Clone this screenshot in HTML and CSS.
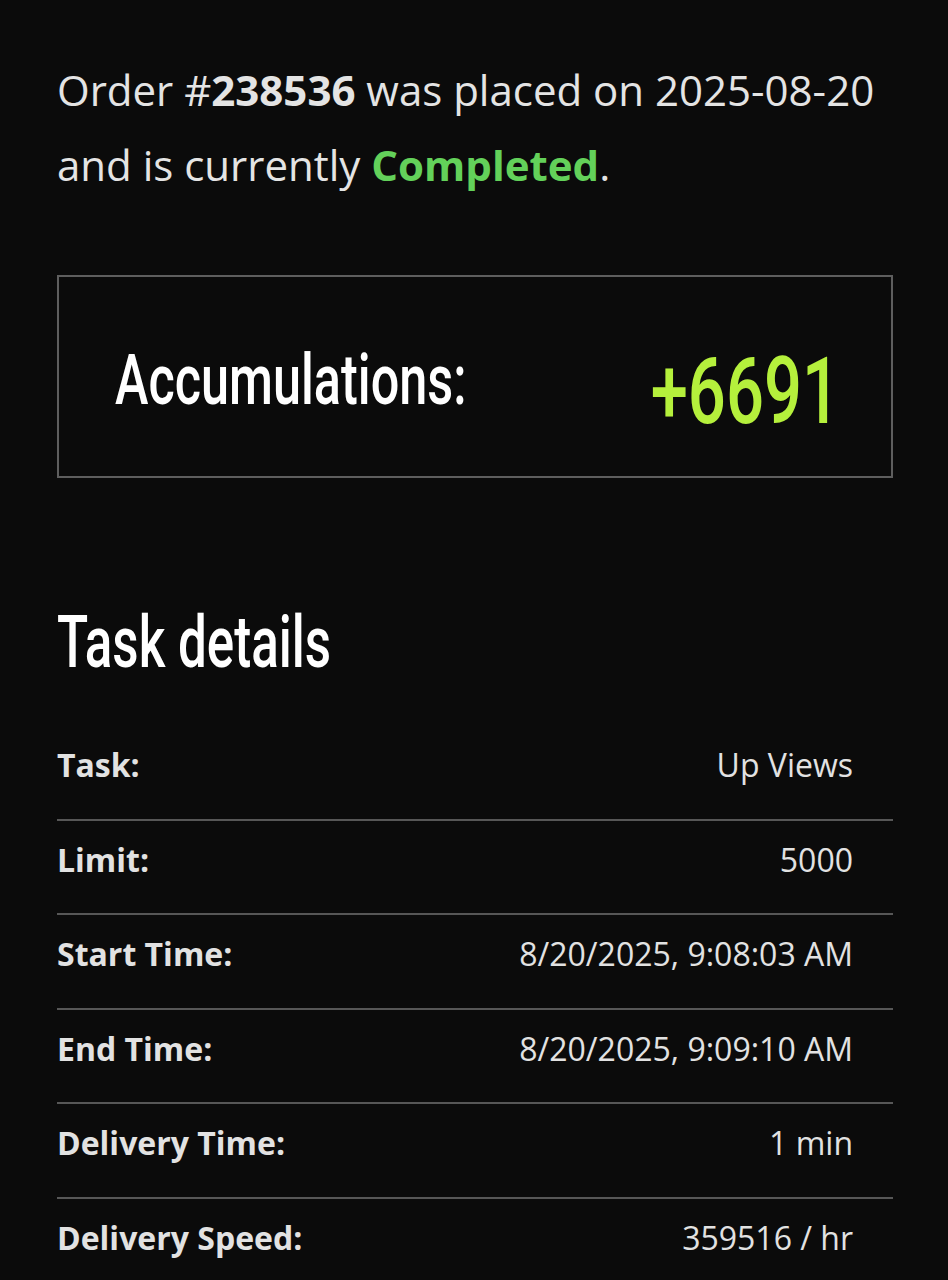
FILE: index.html
```html
<!DOCTYPE html>
<html lang="en">
<head>
<meta charset="utf-8">
<title>Order 238536</title>
<link rel="stylesheet" href="styles.css">
</head>
<body>
<main class="page">
  <p class="summary">Order #<strong>238536</strong> was placed on 2025-08-20 and is currently <strong class="status">Completed</strong>.</p>

  <section class="accum">
    <span class="accum-label condensed">Accumulations:</span>
    <span class="accum-value condensed">+6691</span>
  </section>

  <h2 class="section-title"><span class="condensed">Task details</span></h2>

  <div class="details">
    <div class="row"><span class="label">Task:</span><span class="value">Up Views</span></div>
    <div class="row"><span class="label">Limit:</span><span class="value">5000</span></div>
    <div class="row"><span class="label">Start Time:</span><span class="value">8/20/2025, 9:08:03 AM</span></div>
    <div class="row"><span class="label">End Time:</span><span class="value">8/20/2025, 9:09:10 AM</span></div>
    <div class="row"><span class="label">Delivery Time:</span><span class="value">1 min</span></div>
    <div class="row"><span class="label">Delivery Speed:</span><span class="value">359516 / hr</span></div>
  </div>
</main>
</body>
</html>
```

FILE: styles.css
```css
html, body {
  margin: 0;
  padding: 0;
  background: #0b0b0b;
}

body {
  font-family: "Open Sans", "Noto Sans", sans-serif;
  color: #e4e4e4;
}

.page {
  padding: 52px 55px 0 57px;
}

.summary {
  margin: 0;
  font-size: 42px;
  line-height: 75px;
  color: #e4e4e4;
}

.summary strong {
  font-weight: 700;
}

.summary .status {
  color: #63d15a;
}

/* condensed display face (Oswald-like) */
.condensed {
  display: inline-block;
  font-family: Roboto, "Liberation Sans", sans-serif;
  font-weight: 500;
  transform: scaleX(0.7);
  transform-origin: left center;
  white-space: nowrap;
}

.accum {
  box-sizing: border-box;
  margin-top: 73px;
  height: 203px;
  border: 2px solid #5e5e5e;
  display: flex;
  align-items: flex-start;
  padding: 68px 56px 0;
  line-height: 1;
}

.accum-label {
  flex: none;
  font-size: 70px;
  color: #ffffff;
  transform: scaleX(0.72);
  margin-right: -1.95em;
}

.accum-value {
  flex: none;
  margin-left: auto;
  margin-right: -5px;
  font-size: 93px;
  color: #b5f03c;
  transform: scaleX(0.72);
  transform-origin: right center;
}

.section-title {
  margin: 121px 0 0;
  font-weight: 400;
  font-size: 73px;
  line-height: 80px;
  color: #ffffff;
}

.details {
  margin-top: 44px;
}

.row {
  display: flex;
  justify-content: space-between;
  align-items: center;
  padding: 16px 40px 30px 0;
  border-bottom: 2px solid #575757;
  font-size: 32px;
  line-height: 46.6px;
}

.label {
  font-weight: 700;
  color: #e2e2e2;
}

.value {
  color: #e2e2e2;
}
```
